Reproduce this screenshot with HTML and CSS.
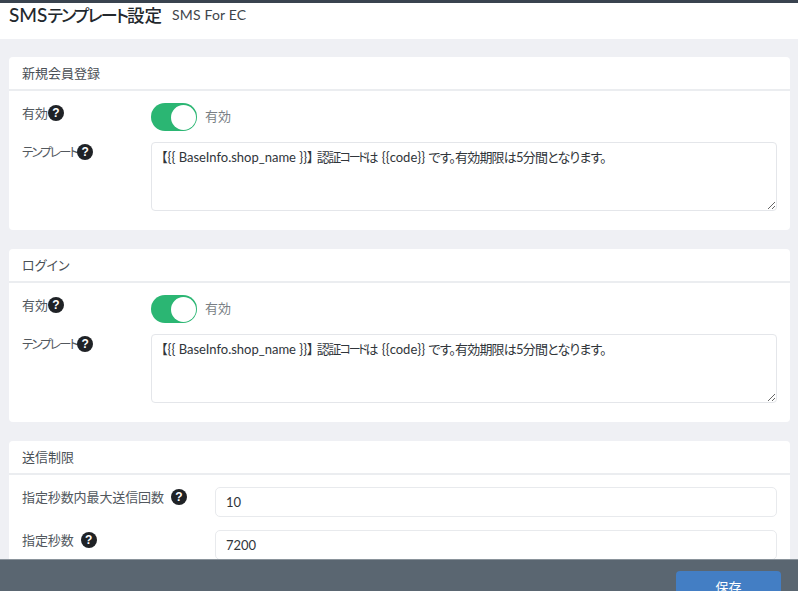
FILE: index.html
```html
<!DOCTYPE html>
<html lang="ja">
<head>
<meta charset="utf-8">
<title>SMSテンプレート設定</title>
<link rel="stylesheet" href="styles.css">
</head>
<body>
<div class="topline"></div>
<header class="page-head">
  <h1 class="title">SMS<span class="title-kana">テンプレート</span><span class="title-kanji">設定</span></h1>
  <span class="subtitle">SMS For EC</span>
</header>
<main class="content">
  <section class="card">
    <h2 class="card-head">新規会員登録</h2>
    <div class="card-body">
      <div class="row row-toggle">
        <div class="label"><span class="label-text">有効</span><span class="help">?</span></div>
        <div class="toggle-wrap"><span class="toggle"><span class="knob"></span></span><span class="toggle-text">有効</span></div>
      </div>
      <div class="row">
        <div class="label"><span class="label-text kana">テンプレート</span><span class="help">?</span></div>
        <div class="area" role="textbox">【{{ BaseInfo.shop_name }}】<span class="kanji-sm">認証</span><span class="kana-sm">コード</span>は {{code}} <span class="tight">です。有効期限は5分間となります。</span></div>
      </div>
    </div>
  </section>
  <section class="card">
    <h2 class="card-head">ログイン</h2>
    <div class="card-body">
      <div class="row row-toggle">
        <div class="label"><span class="label-text">有効</span><span class="help">?</span></div>
        <div class="toggle-wrap"><span class="toggle"><span class="knob"></span></span><span class="toggle-text">有効</span></div>
      </div>
      <div class="row">
        <div class="label"><span class="label-text kana">テンプレート</span><span class="help">?</span></div>
        <div class="area" role="textbox">【{{ BaseInfo.shop_name }}】<span class="kanji-sm">認証</span><span class="kana-sm">コード</span>は {{code}} <span class="tight">です。有効期限は5分間となります。</span></div>
      </div>
    </div>
  </section>
  <section class="card">
    <h2 class="card-head">送信制限</h2>
    <div class="card-body limit-body">
      <div class="row limit-row">
        <div class="label limit-label"><span class="label-text">指定秒数内最大送信回数</span><span class="help help-gap">?</span></div>
        <input class="field" type="text" value="10">
      </div>
      <div class="row limit-row">
        <div class="label limit-label"><span class="label-text">指定秒数</span><span class="help help-gap">?</span></div>
        <input class="field" type="text" value="7200">
      </div>
    </div>
  </section>
</main>
<footer class="foot">
  <button class="save" type="button">保存</button>
</footer>
</body>
</html>
```

FILE: styles.css
```css
* { box-sizing: border-box; }
html, body { height: 100%; }
body {
  margin: 0;
  height: 591px;
  overflow: hidden;
  display: flex;
  flex-direction: column;
  background: #eff0f4;
  color: #3a3f45;
  font-family: "Lato", "Noto Sans CJK JP", sans-serif;
  font-size: 13px;
  font-feature-settings: "palt";
}
.topline { height: 3px; background: #39434f; flex: none; }
.page-head {
  flex: none;
  height: 36px;
  background: #fff;
  display: flex;
  align-items: flex-start;
  gap: 10px;
  padding-left: 9px;
}
.title { margin: 0; font-size: 19px; font-weight: 500; color: #23282d; line-height: 24px; white-space: nowrap; }
.title-kana { font-size: 17px; letter-spacing: -1.8px; }
.title-kanji { font-size: 17.5px; }
.subtitle { font-size: 14px; line-height: 24px; letter-spacing: .15px; color: #3f454b; }
.content {
  flex: 1;
  min-height: 0;
  overflow: hidden;
  padding: 18px 8px 0 9px;
  display: flex;
  flex-direction: column;
  gap: 19px;
}
.card { flex: none; background: #fff; border-radius: 4px; }
.card-head {
  margin: 0;
  height: 34px;
  padding: 0 13px 2px;
  display: flex;
  align-items: center;
  font-size: 13px;
  font-weight: 400;
  color: #4a5056;
  border-bottom: 2px solid #ebedf0;
}
.card-body { padding: 12px 13px 19px; display: flex; flex-direction: column; gap: 11px; }
.row { display: flex; align-items: flex-start; }
.row-toggle { height: 28px; }
.label {
  flex: none;
  width: 129px;
  display: flex;
  align-items: center;
  height: 20px;
  font-size: 13px;
  color: #52585e;
}
.label-text { margin-top: -2px; letter-spacing: -.05px; }
.kana { font-size: 12.5px; letter-spacing: -1.9px; }
.kanji-sm { margin-left: 3px; letter-spacing: -1.5px; }
.kana-sm { font-size: 12px; letter-spacing: -2.3px; }
.tight { letter-spacing: -.8px; }
.help {
  flex: none;
  width: 16px;
  height: 16px;
  border-radius: 50%;
  background: #1f2226;
  color: #fff;
  font-family: "Liberation Sans", sans-serif;
  font-size: 12px;
  font-weight: 700;
  line-height: 16px;
  text-align: center;
}
.help-gap { margin-left: 7px; }
.toggle-wrap { display: flex; align-items: center; height: 28px; gap: 8px; }
.toggle {
  width: 46px;
  height: 28px;
  border-radius: 14px;
  background: #2bb673;
  padding: 1.5px;
  display: flex;
  justify-content: flex-end;
}
.knob { width: 25px; height: 25px; border-radius: 50%; background: #fff; }
.toggle-text { margin-bottom: 3px; font-size: 13px; color: #7a7f85; }
.area {
  flex: 1;
  height: 69px;
  border: 1px solid #e4e6ea;
  border-radius: 4px;
  padding: 4px 9px;
  margin: 0;
  color: #30353a;
  overflow: auto;
  resize: vertical;
}
.limit-body { gap: 13px; }
.limit-label { width: 193px; }
.limit-label .label-text { letter-spacing: -.1px; }
.field {
  flex: 1;
  min-width: 0;
  height: 30px;
  border: 1px solid #e8eaed;
  border-radius: 5px;
  padding: 0 10px;
  font: inherit;
  color: #30353a;
  outline: none;
}
.foot {
  flex: none;
  height: 32px;
  background: #5a6671;
  display: flex;
  justify-content: flex-end;
  align-items: flex-start;
  padding: 11px 17px 0 0;
  overflow: hidden;
  border-top: 1px solid #8a939b;
}
.save {
  flex: none;
  width: 105px;
  height: 30px;
  padding: 0;
  border: none;
  border-radius: 4px;
  background: #437ec4;
  color: #fff;
  font: inherit;
  font-size: 13px;
}
```
